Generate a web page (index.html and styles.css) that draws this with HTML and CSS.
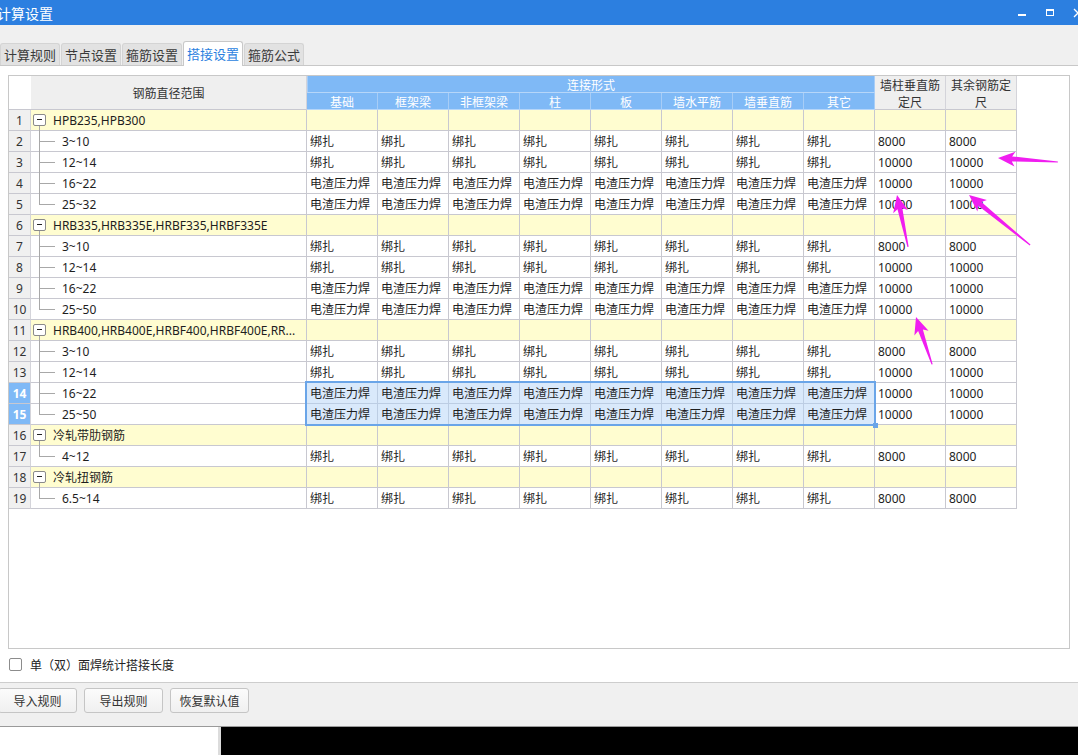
FILE: index.html
```html
<!DOCTYPE html>
<html lang="zh">
<head>
<meta charset="utf-8">
<title>计算设置</title>
<link rel="stylesheet" href="styles.css">
</head>
<body>
<div class="app">
  <div class="titlebar">
    <div class="title">计算设置</div>
    <div class="winctl">
      <div class="wbtn"><svg width="10" height="10" viewBox="0 0 10 10"><rect x="1" y="6" width="8" height="2" fill="#fff"/></svg></div>
      <div class="wbtn"><svg width="10" height="10" viewBox="0 0 10 10"><rect x="1.5" y="1.5" width="7" height="6" fill="none" stroke="#fff" stroke-width="1"/><rect x="1" y="1" width="8" height="2" fill="#fff"/></svg></div>
      <div class="wbtn"><svg width="10" height="10" viewBox="0 0 10 10"><path d="M1 1 L9 9 M9 1 L1 9" stroke="#fff" stroke-width="1.3"/></svg></div>
    </div>
  </div>

  <div class="tabbar">
    <div class="tab">计算规则</div>
    <div class="tab">节点设置</div>
    <div class="tab">箍筋设置</div>
    <div class="tab on">搭接设置</div>
    <div class="tab">箍筋公式</div>
  </div>

  <div class="content">
    <div class="gridbox">
      <div class="hd">
        <div class="h corner"></div>
        <div class="h gray hname">钢筋直径范围</div>
        <div class="h blue htop">连接形式</div>
        <div class="h gray hl1">墙柱垂直筋<br>定尺</div>
        <div class="h gray hl2">其余钢筋定<br>尺</div>
        <div class="h blue sub">基础</div>
        <div class="h blue sub">框架梁</div>
        <div class="h blue sub">非框架梁</div>
        <div class="h blue sub">柱</div>
        <div class="h blue sub">板</div>
        <div class="h blue sub">墙水平筋</div>
        <div class="h blue sub">墙垂直筋</div>
        <div class="h blue sub">其它</div>
      </div>

      <div class="row grp"><div class="c rn">1</div><div class="c nm g"><span class="tb"></span>HPB235,HPB300</div><div class="c"></div><div class="c"></div><div class="c"></div><div class="c"></div><div class="c"></div><div class="c"></div><div class="c"></div><div class="c"></div><div class="c"></div><div class="c"></div></div>
      <div class="row"><div class="c rn">2</div><div class="c nm ch">3~10</div><div class="c">绑扎</div><div class="c">绑扎</div><div class="c">绑扎</div><div class="c">绑扎</div><div class="c">绑扎</div><div class="c">绑扎</div><div class="c">绑扎</div><div class="c">绑扎</div><div class="c">8000</div><div class="c">8000</div></div>
      <div class="row"><div class="c rn">3</div><div class="c nm ch">12~14</div><div class="c">绑扎</div><div class="c">绑扎</div><div class="c">绑扎</div><div class="c">绑扎</div><div class="c">绑扎</div><div class="c">绑扎</div><div class="c">绑扎</div><div class="c">绑扎</div><div class="c">10000</div><div class="c">10000</div></div>
      <div class="row"><div class="c rn">4</div><div class="c nm ch">16~22</div><div class="c">电渣压力焊</div><div class="c">电渣压力焊</div><div class="c">电渣压力焊</div><div class="c">电渣压力焊</div><div class="c">电渣压力焊</div><div class="c">电渣压力焊</div><div class="c">电渣压力焊</div><div class="c">电渣压力焊</div><div class="c">10000</div><div class="c">10000</div></div>
      <div class="row"><div class="c rn">5</div><div class="c nm ch last">25~32</div><div class="c">电渣压力焊</div><div class="c">电渣压力焊</div><div class="c">电渣压力焊</div><div class="c">电渣压力焊</div><div class="c">电渣压力焊</div><div class="c">电渣压力焊</div><div class="c">电渣压力焊</div><div class="c">电渣压力焊</div><div class="c">10000</div><div class="c">10000</div></div>

      <div class="row grp"><div class="c rn">6</div><div class="c nm g"><span class="tb"></span>HRB335,HRB335E,HRBF335,HRBF335E</div><div class="c"></div><div class="c"></div><div class="c"></div><div class="c"></div><div class="c"></div><div class="c"></div><div class="c"></div><div class="c"></div><div class="c"></div><div class="c"></div></div>
      <div class="row"><div class="c rn">7</div><div class="c nm ch">3~10</div><div class="c">绑扎</div><div class="c">绑扎</div><div class="c">绑扎</div><div class="c">绑扎</div><div class="c">绑扎</div><div class="c">绑扎</div><div class="c">绑扎</div><div class="c">绑扎</div><div class="c">8000</div><div class="c">8000</div></div>
      <div class="row"><div class="c rn">8</div><div class="c nm ch">12~14</div><div class="c">绑扎</div><div class="c">绑扎</div><div class="c">绑扎</div><div class="c">绑扎</div><div class="c">绑扎</div><div class="c">绑扎</div><div class="c">绑扎</div><div class="c">绑扎</div><div class="c">10000</div><div class="c">10000</div></div>
      <div class="row"><div class="c rn">9</div><div class="c nm ch">16~22</div><div class="c">电渣压力焊</div><div class="c">电渣压力焊</div><div class="c">电渣压力焊</div><div class="c">电渣压力焊</div><div class="c">电渣压力焊</div><div class="c">电渣压力焊</div><div class="c">电渣压力焊</div><div class="c">电渣压力焊</div><div class="c">10000</div><div class="c">10000</div></div>
      <div class="row"><div class="c rn">10</div><div class="c nm ch last">25~50</div><div class="c">电渣压力焊</div><div class="c">电渣压力焊</div><div class="c">电渣压力焊</div><div class="c">电渣压力焊</div><div class="c">电渣压力焊</div><div class="c">电渣压力焊</div><div class="c">电渣压力焊</div><div class="c">电渣压力焊</div><div class="c">10000</div><div class="c">10000</div></div>

      <div class="row grp"><div class="c rn">11</div><div class="c nm g"><span class="tb"></span>HRB400,HRB400E,HRBF400,HRBF400E,RR...</div><div class="c"></div><div class="c"></div><div class="c"></div><div class="c"></div><div class="c"></div><div class="c"></div><div class="c"></div><div class="c"></div><div class="c"></div><div class="c"></div></div>
      <div class="row"><div class="c rn">12</div><div class="c nm ch">3~10</div><div class="c">绑扎</div><div class="c">绑扎</div><div class="c">绑扎</div><div class="c">绑扎</div><div class="c">绑扎</div><div class="c">绑扎</div><div class="c">绑扎</div><div class="c">绑扎</div><div class="c">8000</div><div class="c">8000</div></div>
      <div class="row"><div class="c rn">13</div><div class="c nm ch">12~14</div><div class="c">绑扎</div><div class="c">绑扎</div><div class="c">绑扎</div><div class="c">绑扎</div><div class="c">绑扎</div><div class="c">绑扎</div><div class="c">绑扎</div><div class="c">绑扎</div><div class="c">10000</div><div class="c">10000</div></div>
      <div class="row"><div class="c rn on">14</div><div class="c nm ch">16~22</div><div class="c s first"><span class="selbox"><span class="handle"></span></span>电渣压力焊</div><div class="c s">电渣压力焊</div><div class="c s">电渣压力焊</div><div class="c s">电渣压力焊</div><div class="c s">电渣压力焊</div><div class="c s">电渣压力焊</div><div class="c s">电渣压力焊</div><div class="c s">电渣压力焊</div><div class="c">10000</div><div class="c">10000</div></div>
      <div class="row"><div class="c rn on">15</div><div class="c nm ch last">25~50</div><div class="c s">电渣压力焊</div><div class="c s">电渣压力焊</div><div class="c s">电渣压力焊</div><div class="c s">电渣压力焊</div><div class="c s">电渣压力焊</div><div class="c s">电渣压力焊</div><div class="c s">电渣压力焊</div><div class="c s">电渣压力焊</div><div class="c">10000</div><div class="c">10000</div></div>

      <div class="row grp"><div class="c rn">16</div><div class="c nm g"><span class="tb"></span>冷轧带肋钢筋</div><div class="c"></div><div class="c"></div><div class="c"></div><div class="c"></div><div class="c"></div><div class="c"></div><div class="c"></div><div class="c"></div><div class="c"></div><div class="c"></div></div>
      <div class="row"><div class="c rn">17</div><div class="c nm ch last">4~12</div><div class="c">绑扎</div><div class="c">绑扎</div><div class="c">绑扎</div><div class="c">绑扎</div><div class="c">绑扎</div><div class="c">绑扎</div><div class="c">绑扎</div><div class="c">绑扎</div><div class="c">8000</div><div class="c">8000</div></div>

      <div class="row grp"><div class="c rn">18</div><div class="c nm g"><span class="tb"></span>冷轧扭钢筋</div><div class="c"></div><div class="c"></div><div class="c"></div><div class="c"></div><div class="c"></div><div class="c"></div><div class="c"></div><div class="c"></div><div class="c"></div><div class="c"></div></div>
      <div class="row"><div class="c rn">19</div><div class="c nm ch last">6.5~14</div><div class="c">绑扎</div><div class="c">绑扎</div><div class="c">绑扎</div><div class="c">绑扎</div><div class="c">绑扎</div><div class="c">绑扎</div><div class="c">绑扎</div><div class="c">绑扎</div><div class="c">8000</div><div class="c">8000</div></div>
    </div>

    <div class="opt"><span class="chk"></span><span class="optlabel">单（双）面焊统计搭接长度</span></div>
  </div>

  <div class="bbar">
    <div class="btn">导入规则</div>
    <div class="btn">导出规则</div>
    <div class="btn">恢复默认值</div>
  </div>

  <div class="foot">
    <div class="foot-l"></div>
    <div class="foot-r"></div>
  </div>
</div>

<svg class="arrows" width="1078" height="755" viewBox="0 0 1078 755">
  <polygon transform="translate(998 158) rotate(3.8)" points="0,0 17,-7.5 14,-2.5 60,-0.6 60,0.6 14,2.5 17,7.5"/>
  <polygon transform="translate(969 195) rotate(39.3)" points="0,0 17,-7.5 14,-2.5 79,-0.6 79,0.6 14,2.5 17,7.5"/>
  <polygon transform="translate(897 195) rotate(78)" points="0,0 17,-7.5 14,-2.5 53,-0.6 53,0.6 14,2.5 17,7.5"/>
  <polygon transform="translate(916 317) rotate(71.2)" points="0,0 17,-7.5 14,-2.5 50,-0.6 50,0.6 14,2.5 17,7.5"/>
</svg>
</body>
</html>
```

FILE: styles.css
```css
* { box-sizing: border-box; }
html, body { margin: 0; padding: 0; }
body {
  width: 1078px;
  height: 755px;
  overflow: hidden;
  position: relative;
  background: #fff;
  font-family: "Noto Sans", "Noto Sans CJK SC", sans-serif;
  font-size: 12px;
  color: #1e1e1e;
}
.app { display: flex; flex-direction: column; height: 755px; }

/* title bar */
.titlebar {
  flex: none;
  height: 25px;
  background: #2c7fe0;
  color: #fff;
  display: flex;
  align-items: center;
  overflow: hidden;
}
.title {
  font-family: "Noto Sans CJK SC", sans-serif;
  font-size: 14px;
  margin-left: -3px;
}
.winctl { margin-left: auto; margin-right: -14px; display: flex; height: 25px; }
.wbtn { width: 28px; height: 25px; display: flex; align-items: center; justify-content: center; }

/* tabs */
.tabbar {
  flex: none;
  height: 41px;
  background: #f0f0f0;
  border-bottom: 1px solid #c8c8c8;
  display: flex;
  align-items: flex-end;
  gap: 1px;
}
.tab {
  width: 60px;
  height: 22px;
  background: #e2e2e2;
  border: 1px solid #d4d4d4;
  border-bottom: none;
  border-radius: 3px 3px 0 0;
  font-family: "Noto Sans CJK SC", sans-serif;
  font-size: 13px;
  color: #3a3a3a;
  display: flex;
  align-items: center;
  justify-content: center;
}
.tab.on {
  height: 25px;
  margin-bottom: -1px;
  background: #fff;
  border-color: #c8c8c8;
  color: #2b7fe0;
  padding-bottom: 2px;
}

/* content */
.content { flex: none; height: 616px; display: flex; flex-direction: column; }
.gridbox {
  flex: none;
  margin: 9px 8px 0;
  height: 574px;
  border: 1px solid #c8c8c8;
  overflow: hidden;
}

.hd {
  display: grid;
  grid-template-columns: 22px 276px repeat(10, 71px);
  grid-template-rows: 17px 17px;
}
.h {
  display: flex;
  align-items: center;
  justify-content: center;
  text-align: center;
  line-height: 17px;
  font-family: "Noto Sans CJK SC", sans-serif;
  font-size: 12px;
}
.corner { grid-row: 1 / 3; grid-column: 1; background: #fff; border-bottom: 1px solid #c8c8d0; }
.hname { grid-row: 1 / 3; grid-column: 2; }
.htop { grid-row: 1; grid-column: 3 / 11; }
.hl1 { grid-row: 1 / 3; grid-column: 11; }
.hl2 { grid-row: 1 / 3; grid-column: 12; }
.gray {
  background: #efefef;
  color: #333;
  border-right: 1px solid #d4d4da;
  border-bottom: 1px solid #c8c8d0;
}
.blue {
  background: #7fb9f6;
  color: #fff;
  border-right: 1px solid #a7cdf7;
  border-bottom: 1px solid #b6d6f9;
}
.htop { border-left: 1px solid #a7cdf7; }

.row {
  display: grid;
  grid-template-columns: 22px 276px repeat(10, 71px);
  height: 21px;
}
.c {
  height: 21px;
  line-height: 21px;
  padding-left: 3px;
  border-right: 1px solid #c8c8d0;
  border-bottom: 1px solid #c8c8d0;
  white-space: nowrap;
  overflow: hidden;
  font-family: "Noto Sans", "Noto Sans CJK SC", sans-serif;
  font-size: 12px;
}
.rn {
  background: #f0f0f0;
  color: #333;
  text-align: center;
  padding-left: 0;
  border-right-color: #d4d4da;
}
.rn.on { background: #7fb9f6; color: #fff; font-weight: bold; }
.grp .c:not(.rn) { background: #fffdd0; }

.nm { position: relative; overflow: visible; }
.nm.g { display: flex; align-items: center; padding-left: 2px; }
.tb {
  width: 13px;
  height: 12px;
  margin-right: 7px;
  border: 1px solid #8a8a8a;
  border-radius: 2px;
  background: #fff;
  position: relative;
  flex: none;
}
.tb::after {
  content: "";
  position: absolute;
  left: 3px;
  top: 4px;
  width: 5px;
  height: 1px;
  background: #222;
}
.nm.g::before {
  content: "";
  position: absolute;
  left: 8px;
  top: 16px;
  bottom: -1px;
  width: 1px;
  background: #a8a8a8;
}
.nm.ch { padding-left: 31px; }
.nm.ch::before {
  content: "";
  position: absolute;
  left: 8px;
  top: 0;
  bottom: -1px;
  width: 1px;
  background: #a8a8a8;
}
.nm.ch.last::before { bottom: auto; height: 11px; }
.nm.ch::after {
  content: "";
  position: absolute;
  left: 8px;
  top: 10px;
  width: 16px;
  height: 1px;
  background: #a8a8a8;
}

.s { background: #d9e9fb; border-right-color: #bccde3; border-bottom-color: #bccde3; }
.s.first { position: relative; overflow: visible; }
.selbox {
  position: absolute;
  left: -2px;
  top: -2px;
  width: 571px;
  height: 45px;
  border: 2px solid #6aa5e8;
  z-index: 2;
  pointer-events: none;
}
.handle {
  position: absolute;
  right: -4px;
  bottom: -4px;
  width: 5px;
  height: 5px;
  background: #6aa5e8;
}

.opt { height: 30px; display: flex; align-items: center; padding-left: 9px; }
.chk {
  width: 13px;
  height: 13px;
  border: 1px solid #8c8c8c;
  border-radius: 2px;
  background: #fff;
  margin-right: 8px;
}
.optlabel { font-family: "Noto Sans CJK SC", sans-serif; font-size: 12px; color: #222; }

/* bottom bar */
.bbar {
  flex: none;
  height: 44px;
  border-top: 1px solid #cdcdcd;
  background: #f0f0f0;
  display: flex;
  align-items: flex-start;
  padding-top: 5px;
  gap: 7px;
}
.btn {
  width: 79px;
  height: 25px;
  border: 1px solid #c5c5c5;
  border-radius: 3px;
  background: linear-gradient(#fbfbfb, #f0f0f0);
  font-family: "Noto Sans CJK SC", sans-serif;
  font-size: 12px;
  color: #333;
  display: flex;
  align-items: center;
  justify-content: center;
}
.btn:first-child { margin-left: -2px; }

.foot { flex: 1; display: flex; border-top: 1px solid #9a9a9a; }
.foot-l { width: 221px; background: #fff; border-right: 3px solid #dcdcdc; }
.foot-r { flex: 1; background: #000; }

.arrows {
  position: absolute;
  left: 0;
  top: 0;
  z-index: 5;
  pointer-events: none;
  fill: #f01ef0;
}
```
